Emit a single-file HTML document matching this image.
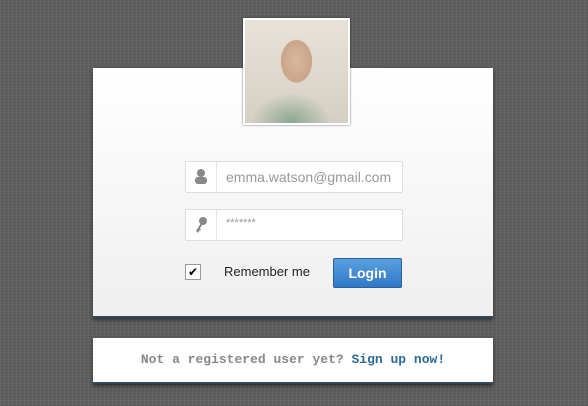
<!DOCTYPE html>
<html><head><style>
body{margin:0;width:588px;height:406px;overflow:hidden;background:#606060;background-image:repeating-linear-gradient(0deg,rgba(0,0,0,.07) 0 1px,transparent 1px 3px),repeating-linear-gradient(90deg,rgba(255,255,255,.04) 0 1px,transparent 1px 4px);font-family:"Liberation Sans",sans-serif;position:relative}
.card{position:absolute;left:93px;top:68px;width:400px;height:248px;background:linear-gradient(#fff,#efefef);border-bottom:2px solid #2e4a5a;box-shadow:0 2px 4px rgba(0,0,0,.5)}
.foot{position:absolute;left:93px;top:338px;width:400px;height:44px;background:#fff;border-bottom:2px solid #2e4a5a;box-shadow:0 2px 4px rgba(0,0,0,.5);text-align:center;font:bold 13px/44px "Liberation Mono",monospace;color:#888}
.foot b{color:#2d6a9a}
.photo{position:absolute;left:243px;top:18px;width:103px;height:103px;border:2px solid #fff;box-shadow:0 0 2px rgba(0,0,0,.6);background:radial-gradient(ellipse 22px 30px at 50% 40%,#d9b8a0,#c9a58a 70%,transparent 72%),radial-gradient(ellipse 40px 30px at 45% 100%,#8aa890,transparent),linear-gradient(#e8e2d8,#d6cfc4)}
.in{position:absolute;left:185px;width:216px;height:30px;border:1px solid #dcdcdc;background:#fff;border-radius:2px}
.in .ic{position:absolute;left:0;top:0;width:30px;height:30px;border-right:1px solid #e6e6e6}
.in span{position:absolute;left:40px;top:0;line-height:30px;font-size:14px;color:#999}
.cb{position:absolute;left:185px;top:264px;width:14px;height:14px;border:1px solid #999;background:#fff;font-size:12px;line-height:14px;text-align:center}
.btn{position:absolute;left:333px;top:258px;width:67px;height:28px;border:1px solid #2a5f95;border-radius:2px;background:linear-gradient(#5aa0e0,#2f78c6);color:#fff;font-weight:bold;font-size:14px;line-height:28px;text-align:center}
</style></head><body>
<div class="card"></div>
<div class="photo"></div>
<div class="in" style="top:161px"><div class="ic"><svg width="30" height="30"><circle cx="15" cy="11" r="4" fill="#888"/><rect x="9" y="15" width="12" height="7" rx="3" fill="#888"/></svg></div><span>emma.watson@gmail.com</span></div>
<div class="in" style="top:209px"><div class="ic"><svg width="30" height="30"><circle cx="17" cy="11" r="4" fill="#888"/><path d="M15 13 L10 21 L12 23 L13 21 L15 20 L14 18 L17 14Z" fill="#888"/></svg></div><span style="font-size:11px;top:-2px">*******</span></div>
<div class="cb">✔</div>
<div style="position:absolute;left:224px;top:264px;font-size:13px;color:#222">Remember me</div>
<div class="btn">Login</div>
<div class="foot">Not a registered user yet? <b>Sign up now!</b></div>
</body></html>
